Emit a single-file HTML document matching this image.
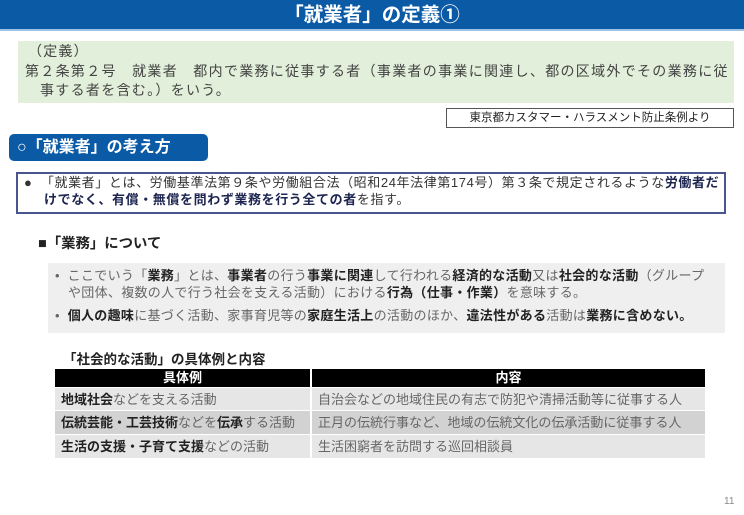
<!DOCTYPE html>
<html><head><meta charset="utf-8"><style>
*{margin:0;padding:0;box-sizing:border-box}
body{width:744px;height:515px;background:#fff;position:relative;overflow:hidden;font-family:"Liberation Sans","Noto Sans CJK JP",sans-serif;color:#333}
.a{position:absolute;white-space:nowrap}
b{font-weight:bold;color:#222}
</style></head><body>
<div class="a" style="left:0;top:0;width:744px;height:31px;background:#0b5aa5;border-bottom:2px solid #9cc3e6"></div>
<div class="a" style="left:0;top:3px;width:744px;text-align:center;color:#fff;font-weight:bold;font-size:19.5px;line-height:24px">「就業者」の定義①</div>

<div class="a" style="left:18px;top:41px;width:716px;height:62px;background:#e2efda"></div>
<div class="a" style="left:28px;top:41px;font-size:14px;line-height:20px;color:#444;letter-spacing:1.2px">（定義）</div>
<div class="a" style="left:25px;top:61px;font-size:14px;line-height:20px;color:#444;letter-spacing:1.3px">第２条第２号　就業者　都内で業務に従事する者（事業者の事業に関連し、都の区域外でその業務に従</div>
<div class="a" style="left:40px;top:80px;font-size:14px;line-height:20px;color:#444;letter-spacing:1.3px">事する者を含む。）をいう。</div>

<div class="a" style="left:446px;top:108px;width:288px;height:20px;border:1px solid #555;font-size:11.5px;line-height:18px;text-align:center;color:#222">東京都カスタマー・ハラスメント防止条例より</div>

<div class="a" style="left:9px;top:134px;width:199px;height:27px;background:#0b5aa5;border-radius:5px;color:#fff;font-weight:bold;font-size:16px;line-height:27px;padding-left:8px">○「就業者」の考え方</div>

<div class="a" style="left:16px;top:172px;width:710px;height:42px;border:2px solid #4a5590"></div>
<div class="a" style="left:24px;top:174px;font-size:13px;line-height:18px;color:#333;letter-spacing:0.6px">●&nbsp;&nbsp;「就業者」とは、労働基準法第９条や労働組合法（昭和24年法律第174号）第３条で規定されるような<b style="color:#1d2550">労働者だ</b></div>
<div class="a" style="left:44px;top:191px;font-size:13px;line-height:18px;color:#333;letter-spacing:0.6px"><b style="color:#1d2550">けでなく、有償・無償を問わず業務を行う全ての者</b>を指す。</div>

<div class="a" style="left:38px;top:235px;font-size:14.4px;line-height:18px;color:#222;font-weight:bold">■「業務」について</div>

<div class="a" style="left:48px;top:263px;width:677px;height:70px;background:#efefef"></div>
<div class="a" style="left:55px;top:267px;font-size:13px;line-height:18px;color:#666;letter-spacing:0.3px">•&nbsp;&nbsp;ここでいう「<b>業務</b>」とは、<b>事業者</b>の行う<b>事業に関連</b>して行われる<b>経済的な活動</b>又は<b>社会的な活動</b>（グループ</div>
<div class="a" style="left:68px;top:284px;font-size:13px;line-height:18px;color:#666;letter-spacing:0.3px">や団体、複数の人で行う社会を支える活動）における<b>行為（仕事・作業）</b>を意味する。</div>
<div class="a" style="left:55px;top:307px;font-size:13px;line-height:18px;color:#666;letter-spacing:0.3px">•&nbsp;&nbsp;<b>個人の趣味</b>に基づく活動、家事育児等の<b>家庭生活上</b>の活動のほか、<b>違法性がある</b>活動は<b>業務に含めない。</b></div>

<div class="a" style="left:63px;top:351px;font-size:13.5px;line-height:17px;color:#222;font-weight:bold">「社会的な活動」の具体例と内容</div>

<div class="a" style="left:55px;top:369px;width:255px;height:18px;background:#000;color:#fff;font-weight:bold;font-size:13px;line-height:18px;text-align:center">具体例</div>
<div class="a" style="left:312px;top:369px;width:393px;height:18px;background:#000;color:#fff;font-weight:bold;font-size:13px;line-height:18px;text-align:center">内容</div>

<div class="a" style="left:55px;top:388px;width:255px;height:22px;background:#e6e6e6"></div>
<div class="a" style="left:312px;top:388px;width:393px;height:22px;background:#e6e6e6"></div>
<div class="a" style="left:55px;top:411px;width:255px;height:23px;background:#d2d2d2"></div>
<div class="a" style="left:312px;top:411px;width:393px;height:23px;background:#d2d2d2"></div>
<div class="a" style="left:55px;top:435px;width:255px;height:23px;background:#e6e6e6"></div>
<div class="a" style="left:312px;top:435px;width:393px;height:23px;background:#e6e6e6"></div>

<div class="a" style="left:61px;top:391px;font-size:13px;line-height:17px;color:#666"><b>地域社会</b>などを支える活動</div>
<div class="a" style="left:318px;top:391px;font-size:13px;line-height:17px;color:#666">自治会などの地域住民の有志で防犯や清掃活動等に従事する人</div>
<div class="a" style="left:61px;top:414px;font-size:13px;line-height:17px;color:#666"><b>伝統芸能・工芸技術</b>などを<b>伝承</b>する活動</div>
<div class="a" style="left:318px;top:414px;font-size:13px;line-height:17px;color:#666">正月の伝統行事など、地域の伝統文化の伝承活動に従事する人</div>
<div class="a" style="left:61px;top:438px;font-size:13px;line-height:17px;color:#666"><b>生活の支援・子育て支援</b>などの活動</div>
<div class="a" style="left:318px;top:438px;font-size:13px;line-height:17px;color:#666">生活困窮者を訪問する巡回相談員</div>

<div class="a" style="left:724px;top:496px;font-size:10px;color:#888">11</div>
</body></html>
